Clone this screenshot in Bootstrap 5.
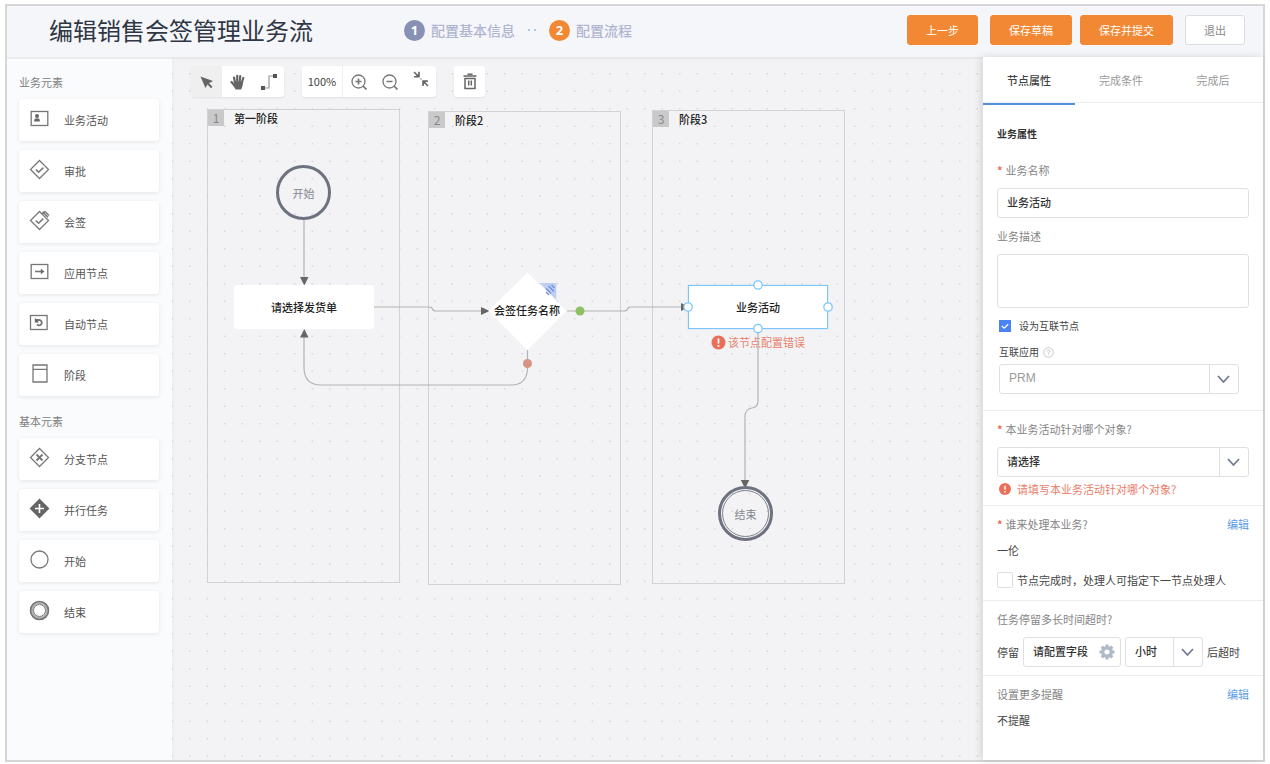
<!DOCTYPE html>
<html lang="zh-CN">
<head>
<meta charset="utf-8">
<meta name="viewport" content="width=device-width, initial-scale=1">
<title>编辑销售会签管理业务流</title>
<link href="https://cdn.jsdelivr.net/npm/bootstrap@5.3.0/dist/css/bootstrap.min.css" rel="stylesheet">
<style>
  body { font-family: "Noto Sans CJK SC", sans-serif; font-size: 11px; line-height: 16px; color: #444; background: #fff; padding: 4px 5px 2px; }
  .frame { min-height: calc(100vh - 6px); border: 2px solid #d6d6d6; }
  a { color: #5b9be8; text-decoration: none; }

  /* header */
  .topbar { height: 51px; background: #f5f6fa; padding: 0 18px 3px 42px; }
  .topbar h1 { font-size: 24px; line-height: 32px; font-weight: 400; color: #2f3744; min-width: 355px; }
  .step { font-size: 14px; line-height: 20px; font-weight: 500; color: #b0b5d0; gap: 6px; }
  .step-no { width: 21px; height: 21px; border-radius: 50%; background: #8791b4; color: #fff; font: 700 13px/21px "Noto Sans", sans-serif; text-align: center; }
  .step-no.current { background: #f28833; }
  .step-dots { gap: 4px; margin: 0 13px; }
  .step-dots i { width: 2px; height: 2px; background: #a9cbe0; }
  .acts { gap: 12px; }
  .act { --bs-btn-font-size: 11px; --bs-btn-line-height: 16px; --bs-btn-padding-x: 18px; --bs-btn-padding-y: 6px; --bs-btn-border-radius: 3px;
    --bs-btn-color: #fff; --bs-btn-bg: #f28833; --bs-btn-border-color: #f28833; --bs-btn-hover-color: #fff; --bs-btn-hover-bg: #e57b26; }
  .act.quiet { --bs-btn-color: #8a8a8a; --bs-btn-bg: #fff; --bs-btn-border-color: #dcdde0; --bs-btn-hover-color: #555; --bs-btn-hover-bg: #fafafa; }

  /* element palette */
  .palette { width: 165px; background: #fafbfc; padding: 15px 13px 0 12px; border-top: 2px solid #ebecef; flex: none; }
  .palette h2 { font-size: 11px; line-height: 16px; font-weight: 400; color: #808080; margin: 0 0 9px; }
  .palette .tools { display: grid; gap: 9px; margin-bottom: 17px; }
  .tool { height: 42px; border: 0; border-radius: 3px; background: #fff; box-shadow: 0 1px 4px rgba(0,0,0,.09); color: #555; display: flex; align-items: center; padding: 0 10px; gap: 14px; text-align: left; }
  .tool svg { width: 21px; height: 21px; margin-bottom: 3px; fill: none; stroke: #777; stroke-width: 1.3; }

  /* canvas */
  .stage { min-width: 0; background: #f3f3f5; box-shadow: inset 0 2px 0 #e6e7e9, inset 2px 0 2px #eeeff1; overflow: hidden; }
  .backdrop { position: absolute; inset: 0; width: 100%; height: 100%; }
  .toolbar { position: relative; padding: 9px 19px; gap: 18px; }
  .tgroup { height: 31px; background: #fff; border-radius: 3px; box-shadow: 0 1px 2px rgba(0,0,0,.08); display: flex; align-items: center; }
  .tgroup button { width: 31px; height: 31px; border: 0; background: none; padding: 0; display: flex; align-items: center; justify-content: center; }
  .tgroup button.on { background: #efefef; }
  .zoomval { width: 41px; line-height: 31px; text-align: center; border-right: 1px solid #f0f0f0; }
  .lane { position: absolute; width: 193px; height: 474px; border: 1px solid #d2d2d3; color: #222; font-weight: 500; gap: 10px; }
  .lane-no { width: 16px; height: 16px; background: #c9c9c9; color: #858890; font-size: 12px; font-weight: 400; text-align: center; }
  .node { position: absolute; display: flex; align-items: center; justify-content: center; color: #1d1d1d; font-weight: 500; }
  .node-box { width: 140px; height: 44px; background: #fff; border-radius: 3px; }
  .node-box.picked { border: 1px solid #7cc6fb; box-shadow: 0 0 1px #7cc6fb; border-radius: 0; }
  .node-round { width: 55px; height: 55px; border: 3px solid #6d727e; border-radius: 50%; color: #858890; font-weight: 400; }
  .node-round.final::before { content: ""; position: absolute; inset: 1px; border: 1px solid #7d828c; border-radius: 50%; }
  .node-err { position: absolute; color: #e8816c; gap: 2px; }

  /* property panel */
  .props { width: 280px; flex: none; background: #fff; box-shadow: -2px 0 8px rgba(0,0,0,.13); z-index: 2; }
  .ptabs { height: 46px; border-bottom: 1px solid #ededed; }
  .ptabs .nav-link { width: 92px; height: 48px; padding: 0; line-height: 46px; text-align: center; color: #999; border-radius: 0; }
  .ptabs .nav-link.active { color: #444; font-weight: 500; border-bottom: 2px solid #5391e0; }
  .sect { padding: 10px 14px 8px; border-bottom: 1px solid #ececee; }
  .sect.first { padding: 23px 14px 16px; }
  .sect:last-child { border-bottom: 0; }
  .sect h2 { font-size: 10px; line-height: 16px; font-weight: 700; color: #333; margin: 0 0 20px; }
  .cap { display: block; color: #858585; }
  .must::before { content: "*"; color: #ea7058; font-weight: 700; margin-right: 3px; }
  .field { display: block; width: 100%; height: 30px; border: 1px solid #e0e0e2; border-radius: 3px; background-color: #fff; color: #333; font-size: 11px; line-height: 16px; font-weight: 500; padding: 0 9px 2px; }
  textarea.field { height: 54px; resize: none; }
  select.field { appearance: none; background-repeat: no-repeat; background-position: right center; padding-right: 30px;
    background-image: url("data:image/svg+xml,%3Csvg xmlns='http://www.w3.org/2000/svg' width='29' height='28'%3E%3Cpath d='M.5 0v28' stroke='%23e0e0e2'/%3E%3Cpath d='M9 11l5.5 6 5.5-6' fill='none' stroke='%23717b91' stroke-width='1.8'/%3E%3C/svg%3E"); }
  .tick { appearance: none; width: 12px; height: 12px; margin: 0; border: 0; flex: none;
    background: #4a83f4 url("data:image/svg+xml,%3Csvg xmlns='http://www.w3.org/2000/svg' viewBox='0 0 12 12'%3E%3Cpath d='M2.8 6l2.4 2.2 4-4' fill='none' stroke='white' stroke-width='1.3'/%3E%3C/svg%3E"); }
  .tick:not(:checked) { width: 16px; height: 16px; background: #fff; border: 1px solid #dededf; border-radius: 2px; }
  .sub { font-size: 10px; }
  .prm { width: 240px; color: #999; font-family: "Liberation Sans", sans-serif; font-size: 12px; font-weight: 400; }
  .cfg { position: relative; width: 98px; }
  .cfg button { position: absolute; right: 6px; top: 7px; border: 0; padding: 0; background: none; width: 16px; height: 16px; display: flex; }
  .warn { color: #ec7b68; gap: 6px; padding-left: 2px; }
  .indent { margin-left: 2px; }
  .gap-row { margin-top: 10px; margin-bottom: 10px; }
  .unit { width: 78px; }
</style>
</head>
<body>
<div class="frame d-flex flex-column">
  <header class="topbar d-flex align-items-center">
    <h1 class="mb-0">编辑销售会签管理业务流</h1>
    <div class="d-flex align-items-center">
      <div class="step d-flex align-items-center"><span class="step-no">1</span>配置基本信息</div>
      <div class="step-dots d-flex"><i></i><i></i></div>
      <div class="step d-flex align-items-center"><span class="step-no current">2</span>配置流程</div>
    </div>
    <div class="acts d-flex ms-auto">
      <button class="btn act" type="button">上一步</button>
      <div class="d-flex gap-2">
        <button class="btn act" type="button">保存草稿</button>
        <button class="btn act" type="button">保存并提交</button>
      </div>
      <button class="btn act quiet" type="button">退出</button>
    </div>
  </header>

  <div class="d-flex flex-grow-1">
    <aside class="palette">
      <h2>业务元素</h2>
      <div class="tools">
        <button class="tool" type="button"><svg viewBox="0 0 21 21"><rect x="2.2" y="3.5" width="16.6" height="14"/><g fill="#666" stroke="none"><circle cx="8" cy="8" r="2"/><path d="M5.2 13.4v-1.4q0-1.700 2.800-1.700t2.800 1.700v1.400z"/></g></svg>业务活动</button>
        <button class="tool" type="button"><svg viewBox="0 0 21 21"><path d="M10.500 1.500l9 9-9 9-9-9z"/><path d="M6.800 10.500l2.800 2.700 4.700-4.600" stroke-width="1.600"/></svg>审批</button>
        <button class="tool" type="button"><svg viewBox="0 0 21 21"><path d="M10.500 1.500l9 9-9 9-9-9z"/><path d="M6.800 10.500l2.800 2.700 4.700-4.600M13.500 1.800l5.500 5.500M16 1.500l4 4M13.300 4l2.700-2.700" stroke-width="1.500"/></svg>会签</button>
        <button class="tool" type="button"><svg viewBox="0 0 21 21"><rect x="2.200" y="3.500" width="16.600" height="14"/><path d="M6 10.500h7" stroke-width="1.600"/><path d="M11.800 7.800l3.600 2.700-3.600 2.700z" fill="#666" stroke="none"/></svg>应用节点</button>
        <button class="tool" type="button"><svg viewBox="0 0 21 21"><rect x="1.500" y="3.500" width="16.600" height="14"/><path d="M7 8h3.500a2.700 2.700 0 1 1-2.500 4.400" stroke-width="1.800"/><path d="M5.800 5.800v4.800h4.200z" fill="#666" stroke="none"/></svg>自动节点</button>
        <button class="tool" type="button"><svg viewBox="0 0 21 21"><path d="M4 2h14v17H4zM4 6.300h14"/></svg>阶段</button>
      </div>
      <h2>基本元素</h2>
      <div class="tools">
        <button class="tool" type="button"><svg viewBox="0 0 21 21"><path d="M10.500 1.500l9 9-9 9-9-9z"/><path d="M7.500 7.500l6 6M13.500 7.500l-6 6" stroke-width="1.900"/></svg>分支节点</button>
        <button class="tool" type="button"><svg viewBox="0 0 21 21"><path d="M10.500 1.500l9 9-9 9-9-9z" fill="#666" stroke="#666"/><path d="M10.500 6v9M6 10.500h9" stroke="#fff" stroke-width="1.600"/></svg>并行任务</button>
        <button class="tool" type="button"><svg viewBox="0 0 21 21"><circle cx="10.500" cy="10.500" r="8.500"/></svg>开始</button>
        <button class="tool" type="button"><svg viewBox="0 0 21 21"><circle cx="10.500" cy="10.500" r="8" stroke="#b2b2b2" stroke-width="3"/><circle cx="10.500" cy="10.500" r="9" stroke-width="1.600"/><circle cx="10.500" cy="10.500" r="6" stroke-width="1"/></svg>结束</button>
      </div>
    </aside>

    <main class="stage position-relative flex-grow-1">
      <svg class="backdrop" aria-hidden="true">
        <defs><pattern id="grid" x="17" y="16" width="35" height="35" patternUnits="userSpaceOnUse"><g fill="#cfcfd3"><circle cx=".8" cy=".8" r=".8"/><circle cx="18.300" cy=".8" r=".8"/><circle cx=".8" cy="18.300" r=".8"/><circle cx="18.300" cy="18.300" r=".8"/></g></pattern></defs>
        <rect width="100%" height="100%" fill="url(#grid)"/>
      </svg>

      <section class="lane d-flex" style="left:35px;top:52px"><span class="lane-no">1</span><span>第一阶段</span></section>
      <section class="lane d-flex" style="left:256px;top:54px"><span class="lane-no">2</span><span>阶段2</span></section>
      <section class="lane d-flex" style="left:480px;top:53px"><span class="lane-no">3</span><span>阶段3</span></section>

      <div class="node-err d-flex align-items-center" style="left:539px;top:277px">
        <svg width="15" height="15" viewBox="0 0 15 15"><circle cx="7.500" cy="7.500" r="7" fill="#e8705a"/><path d="M7.500 3.500v5M7.500 10v1.700" stroke="#fff" stroke-width="1.700"/></svg>该节点配置错误
      </div>

      <!-- connectors -->
      <svg class="backdrop" aria-hidden="true">
        <g fill="none" stroke="#b3b3b3" stroke-width="1.200">
          <path d="M132 163v60"/>
          <path d="M202 250h55q3 0 3.500 2t3.500 2h50"/>
          <path d="M395 254h57q3 0 3.500-2t3.500-2h57"/>
          <path d="M355.500 293v19q-1 16-16 16H149q-16 0-17-16v-36"/>
          <path d="M586 272v72q0 6-6 7t-7 7v66"/>
        </g>
        <g fill="#666">
          <path d="M128 220h8.500l-4.200 8.500zM128 280.500h8.500l-4.200-8.500zM309 250v8l8.500-4zM509 246v8l8-4zM568.800 423h8.500l-3 6h-2.500z"/>
        </g>
        <path d="M367.700 226h16.600v17z" fill="#bccef4"/>
        <path d="M355.500 215.500l39 38.500-39 39-39-39z" fill="#fff"/>
        <path d="M374 231.500l5 5M376.500 229l5.500 5.500M374 235l3 3M379.500 228l3 3" stroke="#6f8ed6" stroke-width="1.300"/>
        <circle cx="408" cy="254" r="4.500" fill="#8cc063"/>
        <circle cx="355.500" cy="306.500" r="4.500" fill="#d69584"/>
      </svg>

      <div class="node node-round" style="left:104px;top:108px">开始</div>
      <div class="node node-box" style="left:62px;top:228px">请选择发货单</div>
      <div class="node" style="left:322px;top:245px">会签任务名称</div>
      <div class="node node-box picked" style="left:516px;top:228px">业务活动</div>
      <div class="node node-round final" style="left:546px;top:429px">结束</div>
      <svg class="backdrop" aria-hidden="true"><g fill="#fff" stroke="#7cc6fb" stroke-width="1.300"><circle cx="586" cy="228" r="4.200"/><circle cx="516" cy="250" r="4.200"/><circle cx="656" cy="250" r="4.200"/><circle cx="586" cy="271.500" r="4.200"/></g></svg>

      <div class="toolbar d-flex">
        <div class="tgroup">
          <button class="on" type="button" aria-label="选择"><svg width="15" height="15" viewBox="0 0 15 15"><path d="M1.500 2.500L14 7l-4 2.200 3.500 3.500-1.500 1.500-3.500-3.700-2 3.500z" fill="#666"/></svg></button>
          <button type="button" aria-label="拖动"><svg width="16" height="16" viewBox="0 0 16 16" fill="none" stroke="#666" stroke-linecap="round" stroke-width="2.200"><path d="M5 8.500L4 3.500M7.200 7.500V1.900M9.700 7.500l.5-5.400M11.800 8.500l1.500-4.500M4.500 11.500L1.500 8"/><path d="M4.600 8h8l-.7 4-1.200 3H6l-1.800-3z" fill="#666" stroke-width="1.200" stroke-linejoin="round"/></svg></button>
          <button type="button" aria-label="连线"><svg width="18" height="18" viewBox="0 0 18 18"><path d="M3 15h6V3h7" fill="none" stroke="#999" stroke-width="1.200"/><path d="M1 13h4v4H1zM13 1h4v4h-4z" fill="#555"/></svg></button>
        </div>
        <div class="tgroup">
          <span class="zoomval">100%</span>
          <button type="button" aria-label="放大"><svg width="16" height="16" viewBox="0 0 16 16" fill="none" stroke="#777" stroke-width="1.300"><circle cx="7.500" cy="7.500" r="6.500"/><path d="M12 12l3.500 3.500M4.500 7.500h6M7.500 4.500v6" stroke-width="1.700"/></svg></button>
          <button type="button" aria-label="缩小"><svg width="16" height="16" viewBox="0 0 16 16" fill="none" stroke="#777" stroke-width="1.300"><circle cx="7.500" cy="7.500" r="6.500"/><path d="M12 12l3.500 3.500M4.500 7.500h6" stroke-width="1.700"/></svg></button>
          <button class="align-items-start pt-1" type="button" aria-label="适应画布"><svg width="18" height="18" viewBox="0 0 18 18"><path d="M2 2l4 4M16 16l-4-4M7 1.800v5H2M11 16v-5h5" fill="none" stroke="#666" stroke-width="1.600"/><path d="M7 3v4H3zM11 15v-4h4z" fill="#666"/><circle cx="9" cy="9" r=".8" fill="#888"/></svg></button>
        </div>
        <div class="tgroup">
          <button type="button" aria-label="删除"><svg width="14" height="17" viewBox="0 0 14 17" fill="none" stroke="#666" stroke-width="1.500"><path d="M.5 3h13M4.500 1.200h5M2 5.500h10v10H2zM5.700 7.500v5M8.300 7.500v5"/></svg></button>
        </div>
      </div>
    </main>

    <aside class="props">
      <nav class="ptabs nav flex-nowrap">
        <a class="nav-link active" href="#base">节点属性</a>
        <a class="nav-link" href="#cond">完成条件</a>
        <a class="nav-link" href="#after">完成后</a>
      </nav>

      <section class="sect first" id="base">
        <h2>业务属性</h2>
        <label class="cap must" for="bizName">业务名称</label>
        <input class="field gap-row" id="bizName" type="text" value="业务活动">
        <label class="cap" for="bizDesc">业务描述</label>
        <textarea class="field gap-row" id="bizDesc"></textarea>
        <div class="d-flex align-items-center gap-2 sub indent gap-row"><input class="tick" id="linkNode" type="checkbox" checked><label for="linkNode">设为互联节点</label></div>
        <div class="d-flex align-items-center gap-1 sub indent"><label for="linkApp">互联应用</label>
          <svg width="11" height="11" viewBox="0 0 11 11" fill="none" stroke="#bbb"><circle cx="5.500" cy="5.500" r="4.800" stroke-width=".8"/><path d="M4 4.500q0-1.500 1.500-1.500T7 4.300q0 .8-1.500 1.600v.6M5.500 7.400v.8" stroke-width=".8"/></svg></div>
        <select class="field prm indent mt-1" id="linkApp"><option>PRM</option></select>
      </section>

      <section class="sect">
        <label class="cap must" for="target">本业务活动针对哪个对象?</label>
        <select class="field gap-row mb-1" id="target"><option>请选择</option></select>
        <div class="warn d-flex align-items-center"><svg width="12" height="12" viewBox="0 0 12 12"><circle cx="6" cy="6" r="6" fill="#e8705a"/><path d="M6 2.700v4M6 8v1.400" stroke="#fff" stroke-width="1.400"/></svg>请填写本业务活动针对哪个对象?</div>
      </section>

      <section class="sect">
        <div class="d-flex justify-content-between"><span class="cap must">谁来处理本业务?</span><a href="#handler">编辑</a></div>
        <div class="gap-row">一伦</div>
        <div class="d-flex align-items-center gap-1 pt-1 pb-1"><input class="tick" id="assign" type="checkbox"><label for="assign">节点完成时，处理人可指定下一节点处理人</label></div>
      </section>

      <section class="sect">
        <span class="cap">任务停留多长时间超时?</span>
        <div class="d-flex align-items-center gap-1 gap-row mb-0">
          <label for="stay">停留</label>
          <div class="cfg"><input class="field" id="stay" type="text" value="请配置字段">
            <button type="button" aria-label="配置字段"><svg width="16" height="16" viewBox="-8 -8 16 16"><g stroke="#aebac7" stroke-width="3.200"><path d="M0-7.500v15M-7.500 0h15M-5.300-5.300l10.600 10.600M5.300-5.300L-5.300 5.300"/></g><circle r="4.300" fill="#fff" stroke="#aebac7" stroke-width="3.400"/></svg></button></div>
          <select class="field unit" aria-label="时间单位"><option>小时</option></select>
          <span>后超时</span>
        </div>
      </section>

      <section class="sect">
        <div class="d-flex justify-content-between"><span class="cap">设置更多提醒</span><a href="#remind">编辑</a></div>
        <div class="gap-row mb-0">不提醒</div>
      </section>
    </aside>
  </div>
</div>
<script src="https://cdn.jsdelivr.net/npm/bootstrap@5.3.0/dist/js/bootstrap.bundle.min.js"></script>
</body>
</html>
